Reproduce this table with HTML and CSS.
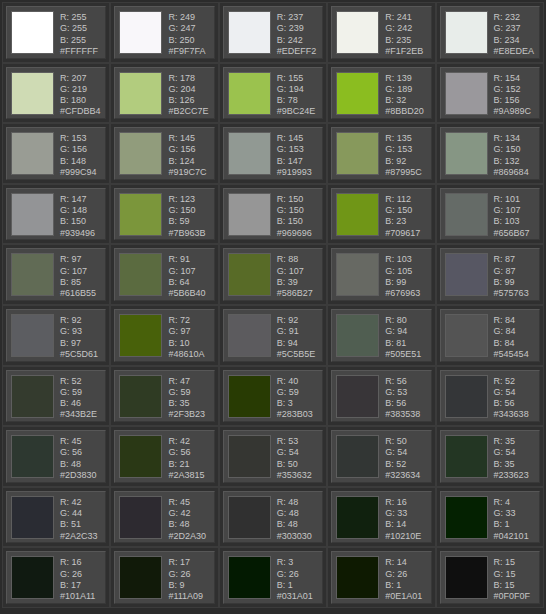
FILE: index.html
```html
<!DOCTYPE html>
<html>
<head>
<meta charset="utf-8">
<link rel="stylesheet" href="styles.css">
</head>
<body>
<div class="grid" id="grid"></div>
<script src="app.js"></script>
</body>
</html>
```
FILE: styles.css
```css
html, body {
  margin: 0;
  padding: 0;
  background: #2b2b2b;
}
.grid {
  width: 546px;
  height: 614px;
  box-sizing: border-box;
  padding: 2px 2px 6px 2px;
  display: grid;
  grid-template-columns: repeat(5, 1fr);
  grid-template-rows: repeat(10, 1fr);
}
.cell {
  border: 1px solid #3b3b3b;
  padding: 3px;
  background: #2f2f2f;
  display: flex;
  min-width: 0;
  min-height: 0;
}
.panel {
  flex: 1;
  display: flex;
  align-items: flex-start;
  background: #464646;
  border-top: 1px solid #575757;
  border-left: 1px solid #575757;
  border-right: 1px solid #383838;
  border-bottom: 1px solid #383838;
  padding: 4px;
}
.swatch {
  width: 41px;
  height: 41px;
  border: 1px solid #5e5e5e;
  flex: none;
}
.vals {
  margin-left: 6px;
  margin-top: 1px;
  display: flex;
  flex-direction: column;
  font-family: "Liberation Sans", Arial, sans-serif;
  font-size: 9px;
  line-height: 11.3px;
  color: #c6c6c6;
}
```
FILE: app.js
```js
const data = [
"FFFFFF","F9F7FA","EDEFF2","F1F2EB","E8EDEA",
"CFDBB4","B2CC7E","9BC24E","8BBD20","9A989C",
"999C94","919C7C","919993","87995C","869684",
"939496","7B963B","969696","709617","656B67",
"616B55","5B6B40","586B27","676963","575763",
"5C5D61","48610A","5C5B5E","505E51","545454",
"343B2E","2F3B23","283B03","383538","343638",
"2D3830","2A3815","353632","323634","233623",
"2A2C33","2D2A30","303030","10210E","042101",
"101A11","111A09","031A01","0E1A01","0F0F0F"
];
const grid = document.getElementById('grid');
for (const hex of data) {
  const r = parseInt(hex.slice(0,2),16), g = parseInt(hex.slice(2,4),16), b = parseInt(hex.slice(4,6),16);
  const cell = document.createElement('div');
  cell.className = 'cell';
  const panel = document.createElement('div');
  panel.className = 'panel';
  const sw = document.createElement('div');
  sw.className = 'swatch';
  sw.style.background = '#' + hex;
  const vals = document.createElement('div');
  vals.className = 'vals';
  for (const t of ['R: ' + r, 'G: ' + g, 'B: ' + b, '#' + hex]) {
    const s = document.createElement('span');
    s.textContent = t;
    vals.appendChild(s);
  }
  panel.appendChild(sw);
  panel.appendChild(vals);
  cell.appendChild(panel);
  grid.appendChild(cell);
}
```
